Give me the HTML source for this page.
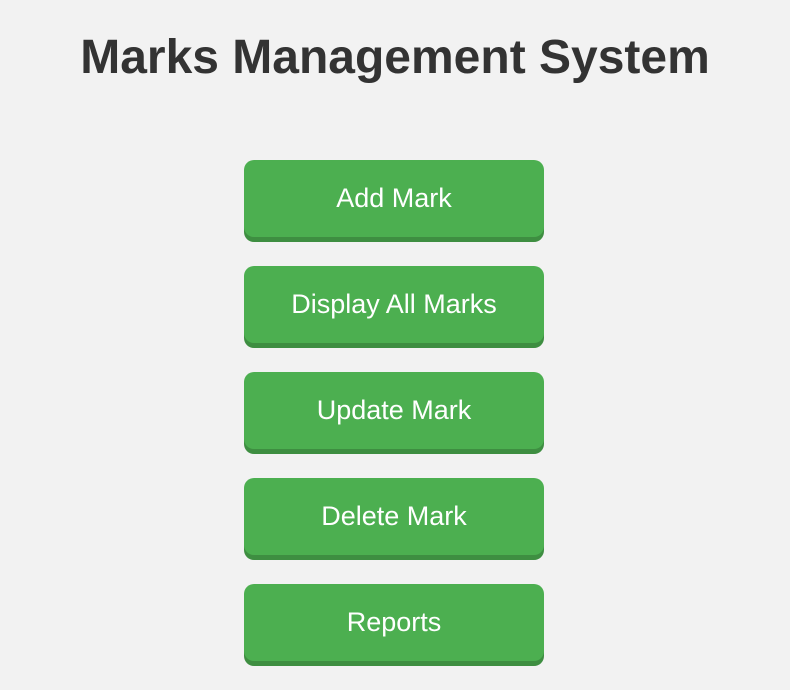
<!DOCTYPE html>
<html><head><style>
html,body{margin:0;padding:0;background:#f2f2f2;width:790px;height:690px;overflow:hidden;font-family:"Liberation Sans",Arial,sans-serif}
h1{margin:0;position:absolute;top:28px;left:0;width:790px;text-align:center;font-size:48px;font-weight:bold;color:#333;line-height:60px}
.b{position:absolute;left:244px;width:300px;height:77px;background:#4caf50;border-radius:10px;box-shadow:0 5px 0 #3e8e41;color:#fff;font-size:27px;text-align:center;line-height:77px}
</style></head><body>
<h1>Marks Management System</h1>
<div class="b" style="top:160px">Add Mark</div>
<div class="b" style="top:266px">Display All Marks</div>
<div class="b" style="top:372px">Update Mark</div>
<div class="b" style="top:478px">Delete Mark</div>
<div class="b" style="top:584px">Reports</div>
</body></html>
